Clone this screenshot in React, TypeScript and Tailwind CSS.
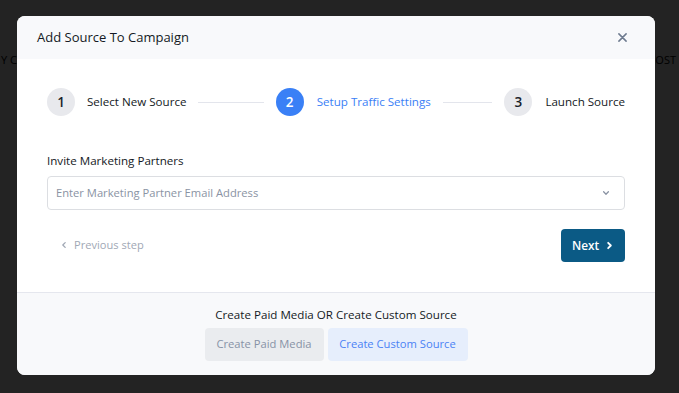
import React from "react";

const font = { fontFamily: '"Open Sans", "Noto Sans", sans-serif' };

function Chevron({ dir, className, sw = 1.6 }: { dir: "left" | "right" | "down"; className?: string; sw?: number }) {
  const d =
    dir === "left" ? "M6.5 2 L3.5 5 L6.5 8" : dir === "right" ? "M3.5 2 L6.5 5 L3.5 8" : "M2 3.5 L5 6.5 L8 3.5";
  return (
    <svg viewBox="0 0 10 10" className={className} fill="none" stroke="currentColor" strokeWidth={sw} strokeLinecap="round" strokeLinejoin="round">
      <path d={d} />
    </svg>
  );
}

function Circle({ n, active }: { n: number; active?: boolean }) {
  return (
    <div
      className={
        active
          ? "w-7 h-7 shrink-0 rounded-full bg-[#3a80f6] text-white flex items-center justify-center text-[13.5px] font-semibold"
          : "w-7 h-7 shrink-0 rounded-full bg-[#e8e9ed] text-[#1a1f2b] flex items-center justify-center text-[13.5px] font-semibold"
      }
    >
      {n}
    </div>
  );
}

export default function App() {
  return (
    <div className="relative w-[679px] h-[393px] bg-[#232323] overflow-hidden" style={font}>
      <div className="absolute left-0 right-0 top-[52px] flex justify-between text-[11px] text-black">
        <span className="pl-[1px]">Y CAMPAIGN</span>
        <span className="pr-[3px]">COST</span>
      </div>
      <div className="absolute left-[17px] top-[16px] w-[638px] h-[359px] rounded-[8px] bg-white overflow-hidden flex flex-col">
        <div className="h-[43px] bg-[#f8f9fb] flex items-center justify-between pl-[20px] pr-[28px] shrink-0">
          <span className="text-[13px] font-medium text-[#141924]">Add Source To Campaign</span>
          <svg viewBox="0 0 10 10" className="w-[9px] h-[9px] text-[#6e7b8f]" fill="none" stroke="currentColor" strokeWidth="1.7" strokeLinecap="round">
            <path d="M1 1 L9 9 M9 1 L1 9" />
          </svg>
        </div>
        <div className="flex-1 px-[30px] pt-[29px]">
          <div className="flex items-center">
            <div className="flex-1 flex items-center">
              <Circle n={1} />
              <span className="ml-[12px] text-[11.6px] text-[#141924] whitespace-nowrap">Select New Source</span>
              <div className="flex-1 h-px bg-[#e3e5ec] mx-[12px]" />
            </div>
            <div className="flex-1 flex items-center">
              <Circle n={2} active />
              <span className="ml-[13px] text-[11.6px] font-medium text-[#3a80f6] whitespace-nowrap">Setup Traffic Settings</span>
              <div className="flex-1 h-px bg-[#e3e5ec] mx-[12px]" />
            </div>
            <div className="flex items-center">
              <Circle n={3} />
              <span className="ml-[13px] text-[11.6px] text-[#141924] whitespace-nowrap">Launch Source</span>
            </div>
          </div>
          <div className="mt-[36px] text-[11.6px] font-medium text-[#141924] leading-[18px]">Invite Marketing Partners</div>
          <div className="mt-[6px] h-[34px] rounded-[4px] border border-[#dcdee2] flex items-center justify-between pl-[8px] pr-[14px]">
            <span className="text-[11.2px] text-[#8a93a3]">Enter Marketing Partner Email Address</span>
            <Chevron dir="down" className="w-[8px] h-[8px] text-[#8a93a3]" />
          </div>
          <div className="mt-[19px] flex items-center justify-between">
            <div className="flex items-center gap-[6px] pl-[13px] text-[#a1a8b5]">
              <Chevron dir="left" className="w-[8px] h-[8px]" />
              <span className="text-[11.1px]">Previous step</span>
            </div>
            <div className="w-[64px] h-[33px] rounded-[4px] bg-[#0b5a85] text-white flex items-center justify-center gap-[6px]">
              <span className="text-[11.8px] font-semibold">Next</span>
              <Chevron dir="right" className="w-[9px] h-[9px]" sw={2} />
            </div>
          </div>
        </div>
        <div className="h-[83px] shrink-0 bg-[#f8f9fb] border-t border-[#e5e7ee] flex flex-col items-center pt-[13px]">
          <span className="text-[11.6px] font-medium text-[#141924] leading-[18px]">Create Paid Media OR Create Custom Source</span>
          <div className="mt-[4px] flex gap-[4px]">
            <div className="h-[33px] w-[119px] rounded-[4px] bg-[#eaecef] text-[#8792a6] text-[11.2px] flex items-center justify-center">Create Paid Media</div>
            <div className="h-[33px] w-[140px] rounded-[4px] bg-[#e6eefc] text-[#4a82f5] text-[11.2px] flex items-center justify-center">Create Custom Source</div>
          </div>
        </div>
      </div>
    </div>
  );
}
